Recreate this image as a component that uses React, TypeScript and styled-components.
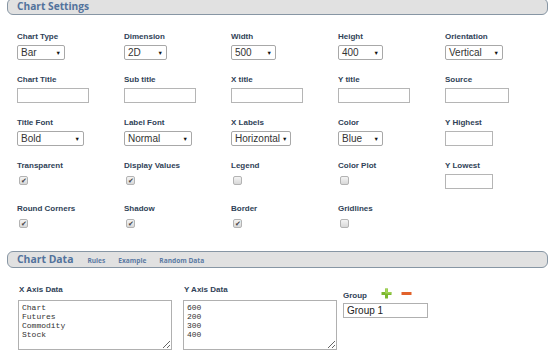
import React from "react";
import styled, { createGlobalStyle } from "styled-components";

const GlobalStyle = createGlobalStyle`
  html, body {
    margin: 0;
    padding: 0;
    background: #fff;
  }
  body {
    font-family: "Liberation Sans", Arial, sans-serif;
  }
`;

type Field =
  | { kind: "select"; label: string; value: string; width: number }
  | { kind: "text"; label: string; width?: number }
  | { kind: "check"; label: string; checked: boolean }
  | { kind: "empty" };

const settings: Field[] = [
  { kind: "select", label: "Chart Type", value: "Bar", width: 48 },
  { kind: "select", label: "Dimension", value: "2D", width: 43 },
  { kind: "select", label: "Width", value: "500", width: 45 },
  { kind: "select", label: "Height", value: "400", width: 45 },
  { kind: "select", label: "Orientation", value: "Vertical", width: 58 },
  { kind: "text", label: "Chart Title" },
  { kind: "text", label: "Sub title" },
  { kind: "text", label: "X title" },
  { kind: "text", label: "Y title" },
  { kind: "text", label: "Source", width: 64 },
  { kind: "select", label: "Title Font", value: "Bold", width: 67 },
  { kind: "select", label: "Label Font", value: "Normal", width: 68 },
  { kind: "select", label: "X Labels", value: "Horizontal", width: 60 },
  { kind: "select", label: "Color", value: "Blue", width: 45 },
  { kind: "text", label: "Y Highest", width: 48 },
  { kind: "check", label: "Transparent", checked: true },
  { kind: "check", label: "Display Values", checked: true },
  { kind: "check", label: "Legend", checked: false },
  { kind: "check", label: "Color Plot", checked: false },
  { kind: "text", label: "Y Lowest", width: 48 },
  { kind: "check", label: "Round Corners", checked: true },
  { kind: "check", label: "Shadow", checked: true },
  { kind: "check", label: "Border", checked: true },
  { kind: "check", label: "Gridlines", checked: false },
  { kind: "empty" },
];

const App = () => (
  <Page>
    <GlobalStyle />
    <SectionBar $top={-2}>
      <BarTitle $size={10.2}>Chart Settings</BarTitle>
    </SectionBar>

    <SettingsGrid>
      {settings.map((f, i) => (
        <Cell key={i}>
          {f.kind !== "empty" && <Label>{f.label}</Label>}
          {f.kind === "select" && (
            <SelectBox $width={f.width}>
              <span>{f.value}</span>
              <Arrow>▼</Arrow>
            </SelectBox>
          )}
          {f.kind === "text" && <TextBox $width={f.width || 72} />}
          {f.kind === "check" && (
            <CheckBox $checked={f.checked}>{f.checked ? "✔" : ""}</CheckBox>
          )}
        </Cell>
      ))}
    </SettingsGrid>

    <SectionBar $top={19}>
      <BarTitle $size={10.4}>Chart Data</BarTitle>
      <BarLinks>
        <a>Rules</a>
        <a>Example</a>
        <a>Random Data</a>
      </BarLinks>
    </SectionBar>

    <DataRow>
      <DataCol>
        <Label>X Axis Data</Label>
        <DataArea readOnly value={"Chart\nFutures\nCommodity\nStock"} />
      </DataCol>
      <DataCol>
        <Label>Y Axis Data</Label>
        <DataArea readOnly value={"600\n200\n300\n400"} />
      </DataCol>
      <GroupCol>
        <GroupHead>
          <Label>Group</Label>
          <IconButton title="Add group">
            <svg width="11" height="11" viewBox="0 0 11 11">
              <path d="M4 0.5h3v3.5h3.5v3H7v3.5H4V7H0.5V4H4z" fill="#7cb82f" />
              <path d="M4.3 0.8h2.4v3.5h3.5v1.2H4.3z" fill="#a6d65a" />
            </svg>
          </IconButton>
          <IconButton title="Remove group">
            <svg width="11" height="11" viewBox="0 0 11 11">
              <rect x="0.5" y="4" width="10" height="3" fill="#e2622b" />
            </svg>
          </IconButton>
        </GroupHead>
        <GroupInput readOnly value="Group 1" />
      </GroupCol>
    </DataRow>
  </Page>
);

const Page = styled.div`
  width: 550px;
  height: 353px;
  overflow: hidden;
`;

const SectionBar = styled.div<{ $top: number }>`
  margin: ${({ $top }) => $top}px 2px 0 7px;
  height: 15px;
  padding: 0 10px 0 9px;
  display: flex;
  align-items: center;
  gap: 14px;
  background: #e1e1e1;
  border: 1px solid #8796a4;
  border-radius: 6px;
`;

const BarTitle = styled.span<{ $size: number }>`
  font-family: "Open Sans", sans-serif;
  font-weight: 700;
  font-size: ${({ $size }) => $size}px;
  color: #52729c;
  line-height: 1;
`;

const BarLinks = styled.div`
  display: flex;
  gap: 13px;
  margin-top: 1px;
  a {
    font-family: "Open Sans", sans-serif;
    font-weight: 700;
    font-size: 6.6px;
    color: #5b7aa3;
    cursor: pointer;
  }
`;

const SettingsGrid = styled.div`
  display: grid;
  grid-template-columns: repeat(5, 107px);
  row-gap: 15px;
  padding: 17px 0 0 17px;
`;

const Cell = styled.div`
  display: flex;
  flex-direction: column;
  align-items: flex-start;
  gap: 3px;
  height: 28px;
`;

const Label = styled.div`
  font-family: "Liberation Sans", Arial, sans-serif;
  font-weight: 700;
  font-size: 8px;
  line-height: 10px;
  color: #2f4257;
  white-space: nowrap;
`;

const SelectBox = styled.div<{ $width: number }>`
  box-sizing: border-box;
  width: ${({ $width }) => $width}px;
  height: 15px;
  padding: 0 3px 0 3px;
  display: flex;
  align-items: center;
  justify-content: space-between;
  border: 1px solid #a8a8a8;
  border-radius: 2px;
  background: #fff;
  font-size: 10px;
  color: #333;
  white-space: nowrap;
`;

const Arrow = styled.span`
  font-size: 5.5px;
  color: #111;
  margin-left: 2px;
`;

const TextBox = styled.div<{ $width: number }>`
  box-sizing: border-box;
  width: ${({ $width }) => $width}px;
  height: 15px;
  border: 1px solid #b5b5b5;
  background: #fff;
`;

const CheckBox = styled.span<{ $checked: boolean }>`
  box-sizing: border-box;
  margin: 2px 0 0 2px;
  width: 9px;
  height: 9px;
  display: flex;
  align-items: center;
  justify-content: center;
  border: 1px solid #b3b3b3;
  border-radius: 2px;
  background: linear-gradient(#f4f4f4, #d8d8d8);
  font-size: 7px;
  line-height: 1;
  color: #444;
`;

const DataRow = styled.div`
  display: flex;
  align-items: flex-start;
  padding: 17px 0 0 18px;
`;

const DataCol = styled.div`
  display: flex;
  flex-direction: column;
  gap: 5px;
  margin-right: 11px;
  ${Label} {
    padding-left: 1px;
  }
`;

const DataArea = styled.textarea`
  box-sizing: border-box;
  width: 154px;
  height: 50px;
  margin: 0;
  padding: 2px 3px;
  border: 1px solid #b0b0b0;
  font-family: "Liberation Mono", "Courier New", monospace;
  font-size: 8px;
  line-height: 9px;
  color: #333;
  overflow: hidden;
  resize: both;
  outline: none;
`;

const GroupCol = styled.div`
  display: flex;
  flex-direction: column;
  gap: 2px;
  margin-top: 3px;
  margin-left: -5px;
`;

const GroupHead = styled.div`
  display: flex;
  align-items: flex-end;
  gap: 9px;
  ${Label} {
    margin-right: 5px;
  }
`;

const IconButton = styled.span`
  display: flex;
  margin-bottom: 2px;
  cursor: pointer;
`;

const GroupInput = styled.input`
  box-sizing: border-box;
  width: 85px;
  height: 15px;
  margin: 0;
  padding: 0 3px;
  border: 1px solid #b0b0b0;
  font-family: "Liberation Sans", Arial, sans-serif;
  font-size: 10px;
  color: #222;
  outline: none;
`;

export default App;
